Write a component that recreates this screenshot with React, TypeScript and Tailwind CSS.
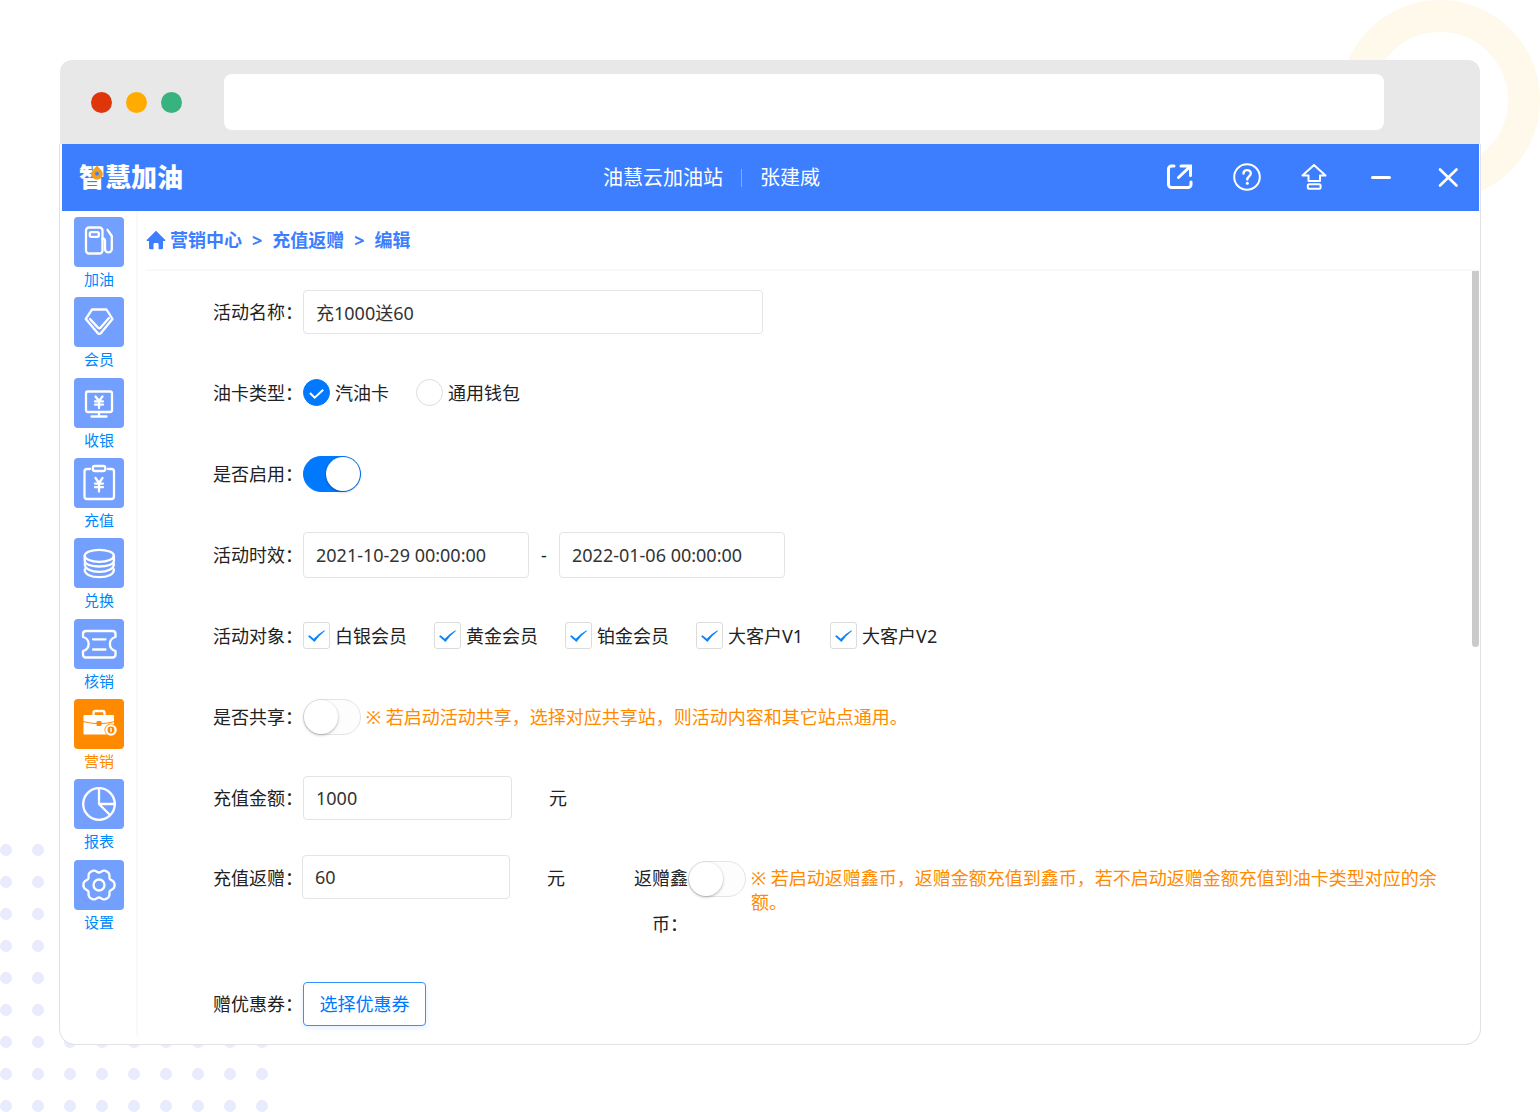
import React, { ReactNode } from "react";

const gearPath = (() => {
  const points: string[] = [];
  for (let i = 0; i < 120; i++) {
    const t = (i / 120) * Math.PI * 2;
    const r = 14.3 + 1.6 * Math.cos(6 * t) - 0.3 * Math.cos(12 * t);
    points.push(`${(25 + r * Math.cos(t)).toFixed(2)} ${(25 + r * Math.sin(t)).toFixed(2)}`);
  }
  return `M${points.join("L")}Z`;
})();

const menu: { label: string; active?: boolean; icon: ReactNode }[] = [
  {
    label: "加油",
    icon: (
      <>
        <rect x="12" y="10.5" width="16.5" height="26" rx="3" />
        <rect x="15.8" y="15.2" width="9" height="4.6" rx="1.5" />
        <path d="M28.5 21.5c2 0 2.5 1 2.5 3V32a3.3 3.3 0 0 0 6.8 0V19l-4.3-6.2" />
      </>
    ),
  },
  {
    label: "会员",
    icon: (
      <>
        <path d="M18 12.5h14.5L38.5 22 27.2 35.8q-1.9 1.8-3.8 0L11.8 22z" />
        <path d="M16 22l8 8.6q1.3 1.2 2.6 0L35 21" />
      </>
    ),
  },
  {
    label: "收银",
    icon: (
      <>
        <rect x="12" y="13.5" width="26" height="20.5" rx="2" />
        <path d="M25 34v4M17.5 38.5h15M21.5 18.5l3.5 4.5 3.5-4.5M25 23v7M21 23.4h8M21 26.6h8" />
      </>
    ),
  },
  {
    label: "充值",
    icon: (
      <>
        <path d="M16 11h-3a2.5 2.5 0 0 0-2.5 2.5v25A2.5 2.5 0 0 0 13 41h24.5a2.5 2.5 0 0 0 2.5-2.5v-25A2.5 2.5 0 0 0 37.5 11H34" />
        <rect x="18.8" y="8" width="12.5" height="5" rx="2" />
        <path d="M21.5 20l3.5 5 3.5-5M25 25v8.500M21 25.600h8M21 29.200h8" />
      </>
    ),
  },
  {
    label: "兑换",
    icon: (
      <>
        <ellipse cx="25.3" cy="17.8" rx="14.6" ry="6" />
        <path d="M10.7 18v5c0 3.300 6.500 5.500 14.600 5.500s14.600-2.200 14.600-5.500v-5M10.700 26c0 5 6.500 7.900 14.600 7.900s14.600-2.900 14.600-7.900M10.700 31.500c0 5 6.500 7.700 14.600 7.700s14.600-2.700 14.600-7.700" />
      </>
    ),
  },
  {
    label: "核销",
    icon: (
      <>
        <path d="M12 12h26.500q3 0 3 3v3c-7.500 2-7.500 12 0 14v3.500q0 3-3 3H12q-3 0-3-3V32c7.500-2 7.500-12 0-14v-3q0-3 3-3z" />
        <path d="M19 20.300h12.500M19 30.500h12.500" />
      </>
    ),
  },
  {
    label: "营销",
    active: true,
    icon: (
      <>
        <path d="M19.500 15.500v-1.500q0-2 2-2h7q2 0 2 2v1.500" />
        <rect x="9.500" y="16" width="30.500" height="19.500" rx="1" fill="currentColor" stroke="none" />
        <path d="M9 22.500q16 4.500 32 0" stroke="#ff8a00" strokeWidth="1" />
        <rect x="22.500" y="22" width="5" height="5" rx="1" fill="#ff8a00" stroke="none" />
        <circle cx="37" cy="31" r="5" fill="#ff8a00" stroke="#ff8a00" strokeWidth="3" />
        <circle cx="37" cy="31" r="4.600" />
        <path d="M37 29.500v3" strokeWidth="1.500" />
      </>
    ),
  },
  {
    label: "报表",
    icon: (
      <>
        <circle cx="25" cy="25" r="15.800" />
        <path d="M25 9.500V25h15.500M25 25l11 11" />
      </>
    ),
  },
  {
    label: "设置",
    icon: (
      <>
        <path d={gearPath} />
        <circle cx="25" cy="25" r="5.500" />
      </>
    ),
  },
];

const windowActions: { label: string; icon: ReactNode }[] = [
  {
    label: "打开外部窗口",
    icon: (
      <>
        <path d="M8 3H5.500A3 3 0 0 0 2.500 6v15.500a3 3 0 0 0 3 3h16.500a3 3 0 0 0 3-3V19" strokeWidth="3" />
        <path d="M12.500 14.500L23 4.500M15 3h9.500v9.500" strokeWidth="3" strokeLinejoin="miter" />
      </>
    ),
  },
  {
    label: "帮助",
    icon: (
      <>
        <circle cx="14" cy="14" r="12.800" strokeWidth="2" />
        <path d="M10.500 10.500C10.500 6 17.800 6 17.800 10.300c0 3-3.500 3-3.500 6.200" strokeWidth="2.400" />
        <circle cx="14.300" cy="20.200" r="1.500" fill="currentColor" stroke="none" />
      </>
    ),
  },
  {
    label: "升级",
    icon: (
      <>
        <path d="M14 2l11.500 10.500H20V18H8.500v-5.500H2.500z" strokeWidth="2" />
        <rect x="7.800" y="21.200" width="12.800" height="4.600" rx="1.500" strokeWidth="2" />
      </>
    ),
  },
  { label: "最小化", icon: <path d="M5.500 14.500h17" strokeWidth="3" /> },
  { label: "关闭", icon: <path d="M6 6.500l16.500 16M22.500 6.500L6 22.500" strokeWidth="2.600" /> },
];

function Row({ label, htmlFor, children }: { label: string; htmlFor?: string; children: ReactNode }) {
  return (
    <div className="flex h-[81px] items-center">
      {htmlFor ? (
        <label htmlFor={htmlFor} className="w-[90px] shrink-0 whitespace-nowrap">
          {label}：
        </label>
      ) : (
        <span className="w-[90px] shrink-0 whitespace-nowrap">{label}：</span>
      )}
      {children}
    </div>
  );
}

function TextInput({ id, value, className, label }: { id: string; value: string; className: string; label?: string }) {
  return (
    <input
      id={id}
      type="text"
      aria-label={label}
      defaultValue={value}
      className={`rounded border border-[#e4e4e4] bg-white px-3 text-[#333] outline-none focus:border-[#0079ff] ${className}`}
    />
  );
}

function Switch({ id, label, on }: { id: string; label?: string; on?: boolean }) {
  return (
    <span className="relative inline-flex h-9 w-[58px] shrink-0">
      <input
        id={id}
        type="checkbox"
        role="switch"
        aria-label={label}
        defaultChecked={on}
        className="peer h-9 w-[58px] cursor-pointer appearance-none rounded-full border border-[#e4e4e4] bg-[#fdfdfd] checked:border-[#0079ff] checked:bg-[#0079ff]"
      />
      <span className="pointer-events-none absolute top-px left-px size-[34px] rounded-full bg-white shadow-[0_1px_3px_rgba(0,0,0,0.3)] peer-checked:left-[23px]" />
    </span>
  );
}

function Radio({ label, checked }: { label: string; checked?: boolean }) {
  return (
    <label className="flex cursor-pointer items-center gap-[5px]">
      <span className="relative inline-flex size-[27px]">
        <input
          type="radio"
          name="cardType"
          defaultChecked={checked}
          className="peer size-[27px] appearance-none rounded-full border border-[#dcdcdc] bg-white checked:border-[#0079ff] checked:bg-[#0079ff]"
        />
        <svg viewBox="0 0 27 27" className="pointer-events-none absolute inset-0 hidden peer-checked:block" fill="none" stroke="#fff" strokeWidth="2">
          <path d="M7 14l4.700 4.700 8.500-8" />
        </svg>
      </span>
      {label}
    </label>
  );
}

function Check({ label }: { label: string }) {
  return (
    <label className="flex cursor-pointer items-center gap-[5px] whitespace-nowrap">
      <span className="relative inline-flex size-[27px]">
        <input type="checkbox" defaultChecked className="peer size-[27px] appearance-none rounded-[3px] border border-[#dcdcdc] bg-white" />
        <svg viewBox="0 0 27 27" className="pointer-events-none absolute inset-0 hidden peer-checked:block" fill="#0a84ff">
          <path d="M5 14.300l1.600-1 4.200 3.400q4.700-5 10.700-8.400l.4.600q-6.500 5-10.500 11.200z" />
        </svg>
      </span>
      {label}
    </label>
  );
}

export default function App() {
  return (
    <div className="relative flex min-h-screen flex-col overflow-hidden bg-white px-[59px] pt-[60px] pb-[67px] font-['Noto_Sans','Noto_Sans_CJK_SC',sans-serif] text-lg leading-6 text-[#222]">
      <div className="absolute top-0 right-0 size-[200px] rounded-full border-[32px] border-[#fff9eb]" />
      <div className="absolute bottom-0 left-0 size-[268px] bg-[radial-gradient(circle_at_6px_6px,#e9ecff_5.5px,transparent_6.5px)] bg-[length:32px_32px]" />

      <div className="relative mx-px flex h-[84px] shrink-0 items-center rounded-t-xl bg-[#e8e8e8] pr-24 pl-[31px]">
        <div className="mr-[42px] flex gap-[14px]">
          <span className="size-[21px] rounded-full bg-[#de350b]" />
          <span className="size-[21px] rounded-full bg-[#ffab00]" />
          <span className="size-[21px] rounded-full bg-[#36b37e]" />
        </div>
        <input type="text" aria-label="地址栏" className="h-14 min-w-0 flex-1 rounded-lg bg-white px-4 outline-none" />
      </div>

      <div className="relative flex flex-1 flex-col rounded-b-2xl border border-t-0 border-[#e2e2e2] bg-white pr-px pl-[2px]">
        <header className="flex h-[67px] shrink-0 items-center bg-[#3d7eff] px-[17px] pb-[2px] text-white">
          <h1 className="relative text-[26px] leading-8 font-black">
            智慧加油
            <svg viewBox="0 0 12 15" className="absolute top-1 left-3 h-[15px] w-3">
              <path d="M6 .3C8 3.300 11.800 5.500 11.800 9a5.800 5.800 0 0 1-11.600 0C.2 5.500 4 3.300 6 .3z" fill="#f0a020" />
              <circle cx="6" cy="8.700" r="1.900" fill="#3d7eff" />
            </svg>
          </h1>
          <div className="flex flex-1 items-center justify-center pt-[3px] pl-[74px] text-xl">
            <span>油慧云加油站</span>
            <span className="mx-[18px] h-[18px] w-px bg-[#80abff]" />
            <span>张建威</span>
          </div>
          <div className="flex gap-[39px]">
            {windowActions.map((a) => (
              <button key={a.label} type="button" aria-label={a.label} className="size-7 cursor-pointer">
                <svg viewBox="0 0 28 28" className="size-7" fill="none" stroke="currentColor" strokeLinecap="round" strokeLinejoin="round">
                  {a.icon}
                </svg>
              </button>
            ))}
          </div>
        </header>

        <div className="flex flex-1">
          <nav className="mb-2 w-[76px] shrink-0 border-r-2 border-[#f9f9f9] pt-[6px]">
            <ul className="grid min-h-[723px] auto-rows-fr">
              {menu.map((m) => (
                <li key={m.label}>
                  <a href="#" className={`flex flex-col items-center text-[15px] leading-6 ${m.active ? "text-[#ff8a00]" : "text-[#0088ff]"}`}>
                    <span className={`size-[50px] rounded text-white ${m.active ? "bg-[#ff8a00]" : "bg-[#739fff]"}`}>
                      <svg viewBox="0 0 50 50" className="size-[50px]" fill="none" stroke="currentColor" strokeWidth="2.3" strokeLinecap="round" strokeLinejoin="round">
                        {m.icon}
                      </svg>
                    </span>
                    {m.label}
                  </a>
                </li>
              ))}
            </ul>
          </nav>

          <main className="flex min-w-0 flex-1 flex-col pl-2">
            <nav className="flex h-[60px] items-center border-b-2 border-[#f9f9f9] font-bold text-[#3d7eff]">
              <svg viewBox="0 0 20 20" className="mr-1 size-5" fill="currentColor">
                <path d="M10 .8L19.300 10q.5.900-.6.900H17V18q0 1.200-1.200 1.200h-3.200v-5q0-1.200-1.200-1.200H8.700q-1.200 0-1.200 1.200v5H4.300Q3 19.200 3 18v-7.100H1.300q-1.100 0-.6-.9z" />
              </svg>
              <a href="#">营销中心</a>
              <span className="mx-[10px]">&gt;</span>
              <a href="#">充值返赠</a>
              <span className="mx-[10px]">&gt;</span>
              <a href="#">编辑</a>
            </nav>

            <div className="flex flex-1">
              <form className="min-w-0 flex-1 pr-6 pl-[67px]">
                <Row label="活动名称" htmlFor="name">
                  <TextInput id="name" value="充1000送60" className="h-11 w-[460px]" />
                </Row>
                <Row label="油卡类型">
                  <div className="flex gap-[27px]">
                    <Radio label="汽油卡" checked />
                    <Radio label="通用钱包" />
                  </div>
                </Row>
                <Row label="是否启用" htmlFor="enabled">
                  <Switch id="enabled" on />
                </Row>
                <Row label="活动时效" htmlFor="start">
                  <TextInput id="start" value="2021-10-29 00:00:00" className="h-[46px] w-[226px]" />
                  <span className="w-[30px] text-center">-</span>
                  <TextInput id="end" label="结束时间" value="2022-01-06 00:00:00" className="h-[46px] w-[226px]" />
                </Row>
                <Row label="活动对象">
                  <div className="flex gap-[27px]">
                    <Check label="白银会员" />
                    <Check label="黄金会员" />
                    <Check label="铂金会员" />
                    <Check label="大客户V1" />
                    <Check label="大客户V2" />
                  </div>
                </Row>
                <Row label="是否共享" htmlFor="shared">
                  <Switch id="shared" />
                  <p className="ml-[5px] text-[#ff8a00]">※ 若启动活动共享，选择对应共享站，则活动内容和其它站点通用。</p>
                </Row>
                <Row label="充值金额" htmlFor="amount">
                  <TextInput id="amount" value="1000" className="h-11 w-[209px]" />
                  <span className="ml-[37px]">元</span>
                </Row>
                <div className="flex items-start pt-[17px] pb-4 leading-[46px]">
                  <label htmlFor="bonus" className="w-[89px] shrink-0 whitespace-nowrap">
                    充值返赠：
                  </label>
                  <TextInput id="bonus" value="60" className="h-11 w-[208px]" />
                  <span className="ml-[37px]">元</span>
                  <label htmlFor="coin" className="ml-[69px] w-[54px] shrink-0 text-right">
                    返赠鑫币：
                  </label>
                  <span className="flex pt-[6px]">
                    <Switch id="coin" />
                  </span>
                  <p className="ml-[5px] min-w-0 flex-1 pt-[11px] leading-6 text-[#ff8a00]">
                    ※ 若启动返赠鑫币，返赠金额充值到鑫币，若不启动返赠金额充值到油卡类型对应的余额。
                  </p>
                </div>
                <Row label="赠优惠券">
                  <button
                    type="button"
                    className="h-11 w-[123px] cursor-pointer rounded border border-[#3392ff] bg-white text-[#0079ff] shadow-[0_2px_6px_rgba(0,121,255,0.12)]"
                  >
                    选择优惠券
                  </button>
                </Row>
              </form>
              <div className="h-[376px] w-[7px] rounded-b bg-[#cacaca]" />
            </div>
          </main>
        </div>
      </div>
    </div>
  );
}
